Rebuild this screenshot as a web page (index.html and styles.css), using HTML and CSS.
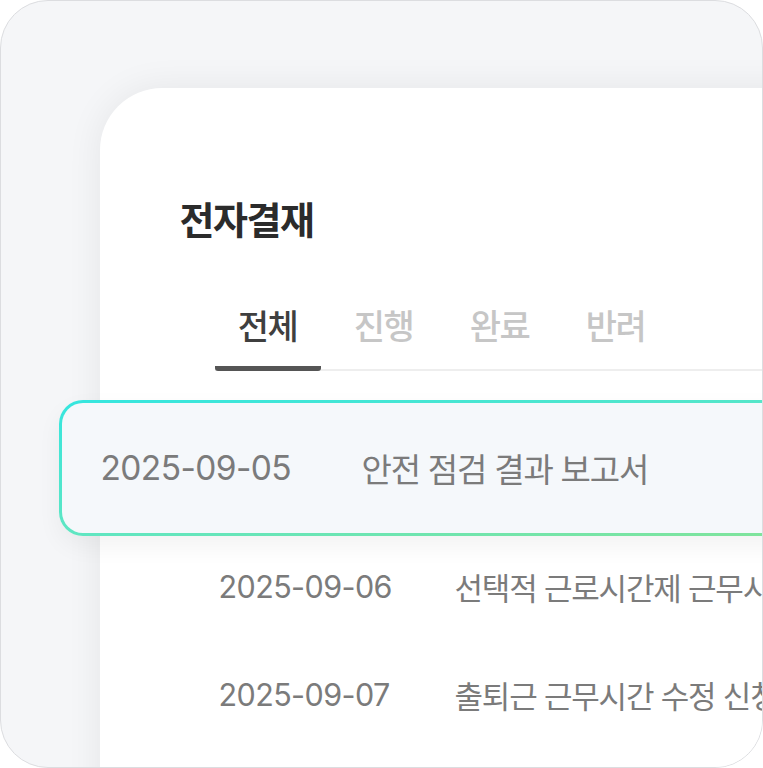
FILE: index.html
```html
<!DOCTYPE html>
<html lang="ko">
<head>
<meta charset="utf-8">
<link rel="stylesheet" href="styles.css">
</head>
<body>
<div class="frame">
  <div class="card">
    <h1 class="title">전자결재</h1>
    <div class="tabs">
      <div class="tab active">전체</div>
      <div class="tab">진행</div>
      <div class="tab">완료</div>
      <div class="tab">반려</div>
    </div>
    <div class="list">
      <div class="row focus">
        <span class="date">2025-09-05</span>
        <span class="name">안전 점검 결과 보고서</span>
      </div>
      <div class="row">
        <span class="date">2025-09-06</span>
        <span class="name">선택적 근로시간제 근무시간 변경 신청</span>
      </div>
      <div class="row">
        <span class="date">2025-09-07</span>
        <span class="name">출퇴근 근무시간 수정 신청</span>
      </div>
    </div>
  </div>
</div>
</body>
</html>
```
FILE: styles.css
```css
html, body {
  margin: 0;
  padding: 0;
  background: #ffffff;
}
body {
  font-family: Inter, "Noto Sans CJK KR", sans-serif;
}
.frame {
  width: 763px;
  height: 768px;
  box-sizing: border-box;
  border: 1.5px solid #dcdde0;
  border-radius: 48px;
  background: #f5f6f8;
  overflow: hidden;
  padding: 86.5px 0 0 98.5px;
}
.card {
  width: 900px;
  height: 760px;
  background: #ffffff;
  border-top-left-radius: 62px;
  box-shadow: 0 0 36px rgba(0, 0, 0, 0.07);
  padding: 110px 0 0 80px;
  box-sizing: border-box;
}
.title {
  margin: 0;
  font-family: "Noto Sans CJK KR", sans-serif;
  font-size: 38px;
  font-weight: 700;
  color: #2b2b2b;
  letter-spacing: -1.5px;
  line-height: 48px;
  margin-top: -4px;
}
.tabs {
  display: flex;
  margin-top: 63px;
  margin-left: 35px;
  border-bottom: 2px solid #eeeeee;
}
.tab {
  width: 106px;
  margin-right: 10px;
  text-align: center;
  font-family: "Noto Sans CJK KR", sans-serif;
  font-size: 34px;
  font-weight: 500;
  color: #c6c6c6;
  letter-spacing: -1.5px;
  line-height: 40px;
  padding-bottom: 21px;
  margin-bottom: -2px;
  border-bottom: 5px solid transparent;
}
.tab.active {
  color: #3f3f3f;
  border-bottom: 5px solid #555555;
  border-radius: 3px;
}
.list {
  margin-left: -120px;
  padding-top: 29px;
}
.row {
  display: flex;
  align-items: center;
  height: 108px;
  padding-left: 159px;
  color: #7b7b7b;
  white-space: nowrap;
}
.row .date {
  width: 236px;
  flex: none;
  font-family: Inter, sans-serif;
  font-size: 30.5px;
  letter-spacing: -0.6px;
}
.row .name {
  font-family: "Noto Sans CJK KR", sans-serif;
  font-size: 31px;
  letter-spacing: -1.2px;
}
.row.focus {
  margin-left: -1px;
  margin-bottom: -3px;
  height: 130px;
  padding-left: 39px;
  border: 3px solid transparent;
  border-radius: 24px;
  background:
    linear-gradient(#f5f8fb, #f5f8fb) padding-box,
    linear-gradient(to bottom right, #35e6df 0%, #5fe6c2 50%, #8ae38f 100%) border-box;
  box-shadow: 0 10px 24px rgba(0, 0, 0, 0.05);
}
.row.focus .date {
  width: 261px;
  font-size: 33.5px;
}
.row.focus .name {
  font-size: 33px;
}
```
